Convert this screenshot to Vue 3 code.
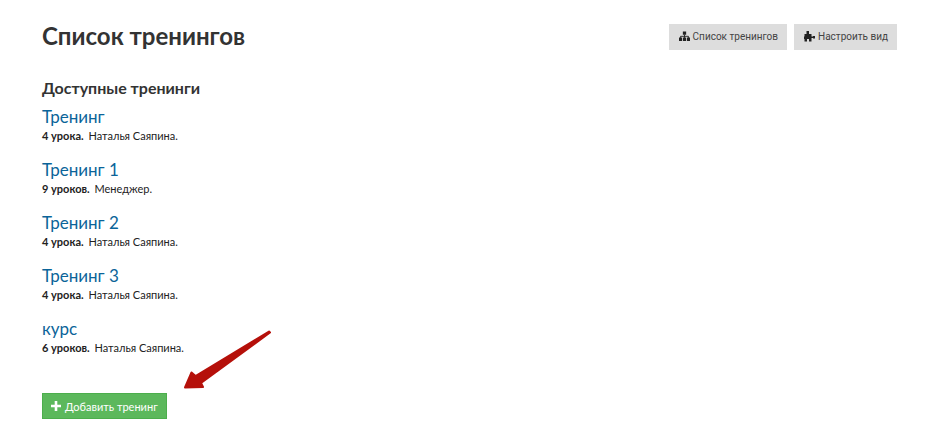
<template>
  <main class="page">
    <header class="page-header">
      <h1>Список тренингов</h1>
      <nav class="actions">
        <a href="#" class="btn btn-default">
          <svg class="icon-tree" viewBox="0 0 12 11" aria-hidden="true">
            <path d="M4.2 0h3.6v3.6H4.2zM0 6.500h3.4v4H0zM4.300 6.500h3.400v4H4.300zM8.600 6.500H12v4H8.600z" />
            <path class="line" d="M6 3.5V7M1.7 7V5.3h8.6V7" />
          </svg>
          Список тренингов
        </a>
        <a href="#" class="btn btn-default">
          <svg class="icon-puzzle" viewBox="0 0 11 11" aria-hidden="true">
            <path d="M2.500 0h2.500v3h2.500v2.500H9V5h2v2.500H9V7H7.500v3.500H5V8H3v2.500H0.500V8H0V5.500h0.500V3h2z" />
          </svg>
          Настроить вид
        </a>
      </nav>
    </header>

    <section>
      <h2>Доступные тренинги</h2>
      <ul class="trainings">
        <li v-for="item in trainings" :key="item.title">
          <a href="#" class="title">{{ item.title }}</a>
          <p><b>{{ item.lessons }}.</b> {{ item.author }}.</p>
        </li>
      </ul>
    </section>

    <div class="footer">
      <button type="button" class="btn btn-success">
        <svg class="icon-plus" viewBox="0 0 10 10" aria-hidden="true">
          <path d="M3.700 0h2.600v3.700H10v2.600H6.300V10H3.700V6.300H0V3.700h3.700z" />
        </svg>
        Добавить тренинг
      </button>
      <svg class="arrow" viewBox="0 0 90 62" aria-hidden="true">
        <path d="M86 1.500 87 2.500 18 53 20 57 2 57.500 8.500 42.500 12.500 46z" />
      </svg>
    </div>
  </main>
</template>

<script setup>
import { ref } from 'vue';

const trainings = ref([
  { title: 'Тренинг', lessons: '4 урока', author: 'Наталья Саяпина' },
  { title: 'Тренинг 1', lessons: '9 уроков', author: 'Менеджер' },
  { title: 'Тренинг 2', lessons: '4 урока', author: 'Наталья Саяпина' },
  { title: 'Тренинг 3', lessons: '4 урока', author: 'Наталья Саяпина' },
  { title: 'курс', lessons: '6 уроков', author: 'Наталья Саяпина' },
]);
</script>

<style>
body {
  margin: 0;
  background: #fff;
}
</style>

<style scoped>
.page {
  padding: 22px 32px 24px 42px;
  font-family: "Comic Sans MS", Lato, sans-serif;
  font-size: 11px;
  color: #222;
}

.page-header {
  display: flex;
  justify-content: space-between;
  align-items: flex-start;
}

h1, h2 {
  margin: 0;
  font-family: "Proxima Nova", Lato, sans-serif;
  font-weight: 700;
  color: #333;
}

h1 {
  font-size: 24px;
  line-height: 28px;
}

h2 {
  margin-top: 27px;
  font-size: 16px;
  line-height: 22px;
}

.actions {
  display: flex;
  gap: 7px;
  margin-top: 2px;
}

.btn {
  display: inline-flex;
  align-items: center;
  gap: 3px;
  box-sizing: border-box;
  height: 26px;
  padding: 0 9px 2px 10px;
  white-space: nowrap;
  text-decoration: none;
}

.btn-default {
  background: #ddd;
  color: #444;
  font-family: "Proxima Nova", Roboto, sans-serif;
  font-size: 10px;
}

.btn-default svg {
  color: #222;
}

.btn-success {
  gap: 4px;
  padding: 0 8px;
  border: 1px solid #4cae4c;
  background: #5cb85c;
  color: #fff;
  font-family: inherit;
  font-size: 11px;
  cursor: pointer;
}

.btn svg {
  fill: currentColor;
  flex: none;
}

.icon-tree, .icon-puzzle {
  width: 11px;
  height: 11px;
}

.icon-plus {
  width: 10px;
  height: 10px;
}

.line {
  fill: none;
  stroke: currentColor;
}

.trainings {
  display: grid;
  gap: 15px;
  margin: 7px 0 0;
  padding: 0;
  list-style: none;
}

.title {
  display: block;
  font-size: 17px;
  line-height: 22px;
  color: #0b6499;
  text-decoration: none;
}

.trainings p {
  margin: 0;
  line-height: 16px;
}

.trainings b {
  margin-right: 2px;
}

.footer {
  position: relative;
  margin-top: 37px;
}

.arrow {
  position: absolute;
  left: 141px;
  bottom: 27px;
  width: 90px;
  height: 62px;
  fill: #b5100a;
  stroke: #b5100a;
  stroke-width: 2;
  stroke-linejoin: round;
}
</style>
